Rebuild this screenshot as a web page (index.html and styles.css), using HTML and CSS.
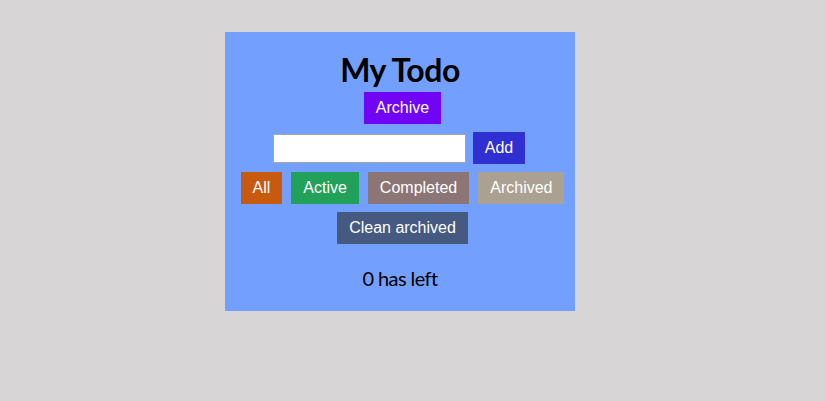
FILE: index.html
```html
<!DOCTYPE html>
<html lang="en">
<head>
<meta charset="utf-8">
<title>My Todo</title>
<link rel="stylesheet" href="styles.css">
</head>
<body>
<div class="page">
  <main class="panel">
    <h1 class="title">My Todo</h1>
    <div class="row row-btn">
      <button class="btn btn-archive">Archive</button>
    </div>
    <div class="row row-input">
      <input class="todo-input" type="text">
      <button class="btn btn-add">Add</button>
    </div>
    <div class="row row-btn">
      <button class="btn btn-all">All</button>
      <button class="btn btn-active">Active</button>
      <button class="btn btn-completed">Completed</button>
      <button class="btn btn-archived">Archived</button>
    </div>
    <div class="row row-btn">
      <button class="btn btn-clean">Clean archived</button>
    </div>
    <p class="left">0 has left</p>
  </main>
</div>
</body>
</html>
```

FILE: styles.css
```css
html, body {
  margin: 0;
  padding: 0;
  background: #d7d5d6;
}
.page {
  padding: 32px 0 0 225px;
}
.panel {
  width: 350px;
  box-sizing: border-box;
  background: #73a0fe;
  padding: 18px 0 21px;
  display: flex;
  flex-direction: column;
  gap: 8px;
}
.title {
  margin: 0 0 -6px;
  font-family: Lato, "Open Sans", sans-serif;
  font-weight: 700;
  font-size: 32px;
  letter-spacing: -0.5px;
  line-height: 40px;
  text-align: center;
  color: #000;
}
.row {
  display: flex;
  justify-content: center;
  align-items: center;
  gap: 9px;
}
.row-btn {
  padding-left: 5px;
}
.row-input {
  gap: 7px;
  padding-right: 2px;
}
.btn {
  border: none;
  margin: 0;
  padding: 7px 12px;
  font-family: "Liberation Sans", Arial, sans-serif;
  font-size: 16px;
  line-height: 18px;
  color: #fff;
  cursor: pointer;
}
.btn-archive { background: #7204f5; }
.btn-add { background: #2f2fd2; }
.btn-all { background: #c85a10; }
.btn-active { background: #22a15b; }
.btn-completed { background: #8b7575; }
.btn-archived { background: #aba192; }
.btn-clean { background: #465980; }
.todo-input {
  width: 193px;
  height: 29px;
  box-sizing: border-box;
  margin: 0;
  border: 1px solid #a6a6a6;
  background: #fff;
  padding: 0 4px;
  font-size: 14px;
}
.left {
  margin: 14px 0 0;
  font-family: Lato, "Open Sans", sans-serif;
  font-size: 20px;
  letter-spacing: -0.6px;
  line-height: 24px;
  text-align: center;
  color: #000;
}
```
